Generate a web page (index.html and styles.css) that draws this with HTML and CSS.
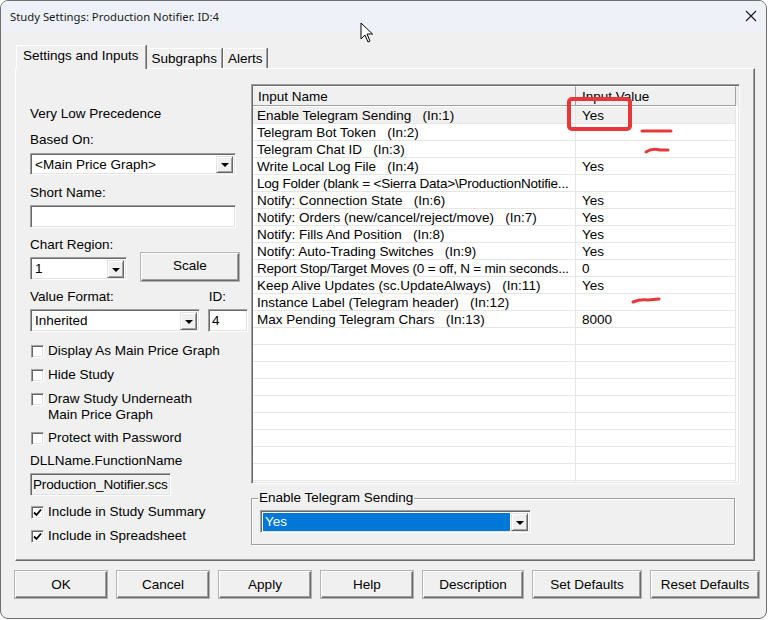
FILE: index.html
```html
<!DOCTYPE html>
<html>
<head>
    <title>Study Settings</title>
    <meta name="viewport" content="width=device-width, initial-scale=1.0">
    <link rel="stylesheet" href="styles.css">
</head>
<body>
    <div class="window">
        <div class="titlebar">
            <span class="title">Study Settings: Production Notifier. ID:4</span>
            <svg class="close" width="12" height="12" viewBox="0 0 12 12">
                <path d="M1 1 L11 11 M11 1 L1 11" stroke="#1a1a1a" stroke-width="1.1" fill="none"/>
            </svg>
        </div>

        <div class="content">
            <div class="tabs">
                <div class="tab active">Settings and Inputs</div>
                <div class="tab">Subgraphs</div>
                <div class="tab">Alerts</div>
            </div>

            <div class="panel">
                <div class="left">
                    <div class="label">Very Low Precedence</div>
                    <div class="label gap10">Based On:</div>
                    <div class="combo wide mt5">
                        <span class="combo-text">&lt;Main Price Graph&gt;</span>
                        <span class="combo-btn"><i class="arrow"></i></span>
                    </div>
                    <div class="label gap10">Short Name:</div>
                    <div class="textbox wide mt4"></div>
                    <div class="label gap9">Chart Region:</div>
                    <div class="row">
                        <div class="combo region">
                            <span class="combo-text">1</span>
                            <span class="combo-btn"><i class="arrow"></i></span>
                        </div>
                        <div class="button scale">Scale</div>
                    </div>
                    <div class="row label-row">
                        <span class="label">Value Format:</span>
                        <span class="label id-label">ID:</span>
                    </div>
                    <div class="row mt4">
                        <div class="combo format">
                            <span class="combo-text">Inherited</span>
                            <span class="combo-btn"><i class="arrow"></i></span>
                        </div>
                        <div class="textbox idbox">4</div>
                    </div>

                    <div class="check first"><span class="box"></span><span>Display As Main Price Graph</span></div>
                    <div class="check"><span class="box"></span><span>Hide Study</span></div>
                    <div class="check"><span class="box"></span><span>Draw Study Underneath<br>Main Price Graph</span></div>
                    <div class="check tight"><span class="box"></span><span>Protect with Password</span></div>

                    <div class="label gap7">DLLName.FunctionName</div>
                    <div class="textbox readonly mt4">Production_Notifier.scs</div>

                    <div class="check mt4"><span class="box"><svg width="9" height="9" viewBox="0 0 9 9"><path d="M1 4.5 L3.5 7 L8 1.5" stroke="#000" stroke-width="1.8" fill="none"/></svg></span><span>Include in Study Summary</span></div>
                    <div class="check"><span class="box"><svg width="9" height="9" viewBox="0 0 9 9"><path d="M1 4.5 L3.5 7 L8 1.5" stroke="#000" stroke-width="1.8" fill="none"/></svg></span><span>Include in Spreadsheet</span></div>
                </div>

                <div class="right">
                    <div class="grid">
                        <div class="grid-head">
                            <div class="hcell c1">Input Name</div>
                            <div class="hcell c2">Input Value</div>
                        </div>
                        <div class="grid-row selected"><div class="cell c1">Enable Telegram Sending   (In:1)</div><div class="cell c2">Yes</div></div>
                        <div class="grid-row"><div class="cell c1">Telegram Bot Token   (In:2)</div><div class="cell c2"></div></div>
                        <div class="grid-row"><div class="cell c1">Telegram Chat ID   (In:3)</div><div class="cell c2"></div></div>
                        <div class="grid-row"><div class="cell c1">Write Local Log File   (In:4)</div><div class="cell c2">Yes</div></div>
                        <div class="grid-row"><div class="cell c1 long">Log Folder (blank = &lt;Sierra Data&gt;\ProductionNotifie...</div><div class="cell c2"></div></div>
                        <div class="grid-row"><div class="cell c1">Notify: Connection State   (In:6)</div><div class="cell c2">Yes</div></div>
                        <div class="grid-row"><div class="cell c1">Notify: Orders (new/cancel/reject/move)   (In:7)</div><div class="cell c2">Yes</div></div>
                        <div class="grid-row"><div class="cell c1">Notify: Fills And Position   (In:8)</div><div class="cell c2">Yes</div></div>
                        <div class="grid-row"><div class="cell c1">Notify: Auto-Trading Switches   (In:9)</div><div class="cell c2">Yes</div></div>
                        <div class="grid-row"><div class="cell c1 long">Report Stop/Target Moves (0 = off, N = min seconds...</div><div class="cell c2">0</div></div>
                        <div class="grid-row"><div class="cell c1">Keep Alive Updates (sc.UpdateAlways)   (In:11)</div><div class="cell c2">Yes</div></div>
                        <div class="grid-row"><div class="cell c1">Instance Label (Telegram header)   (In:12)</div><div class="cell c2"></div></div>
                        <div class="grid-row"><div class="cell c1">Max Pending Telegram Chars   (In:13)</div><div class="cell c2">8000</div></div>
                        <div class="grid-row"><div class="cell c1"></div><div class="cell c2"></div></div>
                        <div class="grid-row"><div class="cell c1"></div><div class="cell c2"></div></div>
                        <div class="grid-row"><div class="cell c1"></div><div class="cell c2"></div></div>
                        <div class="grid-row"><div class="cell c1"></div><div class="cell c2"></div></div>
                        <div class="grid-row"><div class="cell c1"></div><div class="cell c2"></div></div>
                        <div class="grid-row"><div class="cell c1"></div><div class="cell c2"></div></div>
                        <div class="grid-row"><div class="cell c1"></div><div class="cell c2"></div></div>
                        <div class="grid-row"><div class="cell c1"></div><div class="cell c2"></div></div>
                        <div class="grid-row"><div class="cell c1"></div><div class="cell c2"></div></div>
                        <div class="grid-row"><div class="cell c1"></div><div class="cell c2"></div></div>
                    </div>

                    <fieldset class="group">
                        <legend>Enable Telegram Sending</legend>
                        <div class="combo value">
                            <span class="combo-text picked">Yes</span>
                            <span class="combo-btn"><i class="arrow"></i></span>
                        </div>
                    </fieldset>
                </div>
            </div>

            <div class="buttons">
                <div class="button w92">OK</div>
                <div class="button w92">Cancel</div>
                <div class="button w92">Apply</div>
                <div class="button w92">Help</div>
                <div class="button w100">Description</div>
                <div class="button w108">Set Defaults</div>
                <div class="button w108">Reset Defaults</div>
            </div>
        </div>

        <!-- red marks drawn on top of the screenshot -->
        <svg class="marks" width="768" height="620" viewBox="0 0 768 620">
            <rect x="569" y="99" width="61" height="30" rx="3" stroke="#e8373a" stroke-width="4" fill="none"/>
            <path d="M642 131 L671 131" stroke="#e8373a" stroke-width="3" stroke-linecap="round" fill="none"/>
            <path d="M646 152 Q652 148 660 150 L668 150" stroke="#e8373a" stroke-width="3" stroke-linecap="round" fill="none"/>
            <path d="M633 302 Q640 299 648 300 L659 299" stroke="#e8373a" stroke-width="3" stroke-linecap="round" fill="none"/>
        </svg>

        <svg class="cursor" width="14" height="22" viewBox="0 0 14 22">
            <path d="M1 1 L1 17 L5 13 L8 20 L10 19 L7 12 L12.5 12 Z" fill="#fff" stroke="#000" stroke-width="1" stroke-linejoin="round"/>
        </svg>
    </div>
</body>
</html>
```

FILE: styles.css
```css
* {
    box-sizing: border-box;
}

body {
    margin: 0;
    padding: 0;
    background: #ffffff;
    font-family: "Liberation Sans", Arial, sans-serif;
    font-size: 13.5px;
    color: #000;
}

.window {
    position: relative;
    width: 767px;
    height: 619px;
    background: #f0f0f0;
    border: 1px solid #6e6e6e;
    border-radius: 8px;
    overflow: hidden;
}

.titlebar {
    height: 31px;
    background: #eef2f8;
    display: flex;
    align-items: center;
    justify-content: space-between;
    padding: 0 9px 0 9px;
}

.title {
    font-family: "Noto Sans", "Open Sans", sans-serif;
    font-size: 11.3px;
    color: #1a1a1a;
}

.close {
    margin-top: -1px;
}

.content {
    padding: 0 7px 0 14px;
}

/* tabs */
.tabs {
    display: flex;
    align-items: flex-end;
    margin-top: 13px;
    height: 23px;
    padding-left: 1px;
}

.tab {
    height: 20px;
    line-height: 19px;
    padding: 0 4px;
    border-top: 1px solid #fff;
    border-left: 1px solid #fff;
    border-right: 1px solid #a0a0a0;
    box-shadow: 1px 0 0 #696969;
    background: #f0f0f0;
}

.tab + .tab {
    margin-left: 1px;
}

.tab.active {
    position: relative;
    z-index: 1;
    height: 24px;
    line-height: 20px;
    padding: 0 6px;
    margin-bottom: -1px;
    margin-right: 1px;
}

.tab.active + .tab {
    border-left: none;
}

/* main panel */
.panel {
    display: flex;
    width: 740px;
    height: 493px;
    border-top: 1px solid #fff;
    border-left: 1px solid #fff;
    border-right: 1px solid #696969;
    border-bottom: 1px solid #696969;
    box-shadow: inset -1px -1px 0 #a0a0a0;
    padding: 0 13px 0 14px;
}

.left {
    width: 218px;
    padding-top: 37px;
}

.label {
    line-height: 16px;
    height: 16px;
    white-space: nowrap;
}

.gap10 { margin-top: 10px; }
.gap9 { margin-top: 9px; }
.gap7 { margin-top: 7px; }
.mt4 { margin-top: 4px; }
.mt5 { margin-top: 5px; }

.row {
    display: flex;
    align-items: flex-start;
}

.label-row {
    margin-top: 8px;
}

.id-label {
    margin-left: 95px;
}

/* combo boxes and text boxes */
.combo {
    display: flex;
    height: 22px;
    background: #fff;
    border-top: 1px solid #a0a0a0;
    border-left: 1px solid #a0a0a0;
    border-right: 1px solid #fff;
    border-bottom: 1px solid #fff;
    box-shadow: inset 1px 1px 0 #696969, inset -1px -1px 0 #e3e3e3;
    padding: 2px 2px 1px 2px;
}

.combo-text {
    flex: 1;
    line-height: 17px;
    padding-left: 2px;
    white-space: nowrap;
    overflow: hidden;
}

.combo-text.picked {
    background: #0078d7;
    color: #fff;
    margin-right: 1px;
}

.combo-btn {
    width: 17px;
    background: #f0f0f0;
    border-top: 1px solid #e3e3e3;
    border-left: 1px solid #e3e3e3;
    border-right: 1px solid #696969;
    border-bottom: 1px solid #696969;
    box-shadow: inset 1px 1px 0 #fff, inset -1px -1px 0 #a0a0a0;
    display: flex;
    align-items: center;
    justify-content: center;
}

.arrow {
    width: 0;
    height: 0;
    border-left: 4px solid transparent;
    border-right: 4px solid transparent;
    border-top: 4px solid #000;
    margin-top: 1px;
}

.combo.wide {
    width: 206px;
}

.combo.region {
    width: 97px;
    height: 23px;
    margin-top: 4px;
}

.combo.format {
    width: 170px;
    height: 23px;
}

.combo.value {
    width: 271px;
    height: 23px;
    margin: 4px 0 0 2px;
}

.textbox {
    height: 23px;
    background: #fff;
    border-top: 1px solid #a0a0a0;
    border-left: 1px solid #a0a0a0;
    border-right: 1px solid #fff;
    border-bottom: 1px solid #fff;
    box-shadow: inset 1px 1px 0 #696969, inset -1px -1px 0 #e3e3e3;
    padding: 2px 3px;
    line-height: 18px;
    white-space: nowrap;
    overflow: hidden;
}

.textbox.wide {
    width: 206px;
}

.textbox.idbox {
    width: 40px;
    margin-left: 8px;
}

.textbox.readonly {
    width: 141px;
    background: #f0f0f0;
    padding: 2px 0 2px 2px;
    letter-spacing: -0.15px;
}

/* buttons */
.button {
    height: 27px;
    line-height: 25px;
    text-align: center;
    background: #f0f0f0;
    border-top: 1px solid #fff;
    border-left: 1px solid #fff;
    border-right: 1px solid #696969;
    border-bottom: 1px solid #696969;
    box-shadow: inset -1px -1px 0 #a0a0a0, 0 0 0 1px #b4b4b4;
    white-space: nowrap;
}

.button.scale {
    width: 98px;
    height: 28px;
    margin-left: 14px;
    line-height: 24px;
}

.w92 { width: 92px; }
.w100 { width: 100px; }
.w108 { width: 108px; }

/* check boxes */
.check {
    display: flex;
    align-items: flex-start;
    line-height: 16px;
    margin-top: 8px;
}

.check.first {
    margin-top: 11px;
}

.check.tight {
    margin-top: 7px;
}

.box {
    width: 13px;
    height: 13px;
    margin: 2px 4px 0 1px;
    background: #fff;
    border-top: 1px solid #a0a0a0;
    border-left: 1px solid #a0a0a0;
    border-right: 1px solid #fff;
    border-bottom: 1px solid #fff;
    box-shadow: inset 1px 1px 0 #696969, inset -1px -1px 0 #e3e3e3;
    display: flex;
    align-items: center;
    justify-content: center;
    flex-shrink: 0;
}

/* right side: inputs grid */
.right {
    margin-left: 3px;
    padding-top: 15px;
    width: 489px;
}

.grid {
    height: 400px;
    background: #fff;
    border-top: 1px solid #a0a0a0;
    border-left: 1px solid #a0a0a0;
    border-right: 1px solid #fff;
    border-bottom: 1px solid #fff;
    box-shadow: inset 1px 1px 0 #696969, inset -1px -1px 0 #e3e3e3;
    padding: 1px 1px 1px 1px;
    overflow: hidden;
}

.grid-head {
    display: flex;
    height: 21px;
    background: #f0f0f0;
    border-bottom: 1px solid #fff;
}

.hcell {
    line-height: 19px;
    border-top: 1px solid #fff;
    border-right: 1px solid #a0a0a0;
    border-bottom: 1px solid #a0a0a0;
    white-space: nowrap;
    color: #000;
}

.c1 {
    width: 323px;
    padding-left: 5px;
}

.c2 {
    width: 160px;
    padding-left: 6px;
}

.grid-row {
    display: flex;
    height: 17px;
}

.grid-row.selected {
    background: #f0f0f0;
    margin-right: 2px;
}

.cell {
    line-height: 17px;
    border-bottom: 1px solid #e6e6e6;
    white-space: pre;
    overflow: hidden;
}

.cell.c1 {
    padding-left: 4px;
    border-right: 1px solid #e6e6e6;
}

.cell.c1.long {
    letter-spacing: -0.2px;
}

.cell.c2 {
    border-right: 1px solid #e6e6e6;
}

/* group box under the grid */
.group {
    margin: 6px 0 0 0;
    width: 484px;
    height: 55px;
    border: 1px solid #a0a0a0;
    box-shadow: inset 1px 1px 0 #fff, 1px 1px 0 #fff;
    padding: 0 6px 11px 6px;
    min-width: 0;
}

.group legend {
    padding: 0 1px;
    line-height: 16px;
}

.buttons {
    display: flex;
    gap: 10px;
    margin-top: 10px;
}

/* overlays */
.marks {
    position: absolute;
    left: -1px;
    top: -1px;
    pointer-events: none;
}

.cursor {
    position: absolute;
    left: 359px;
    top: 21px;
}
```
